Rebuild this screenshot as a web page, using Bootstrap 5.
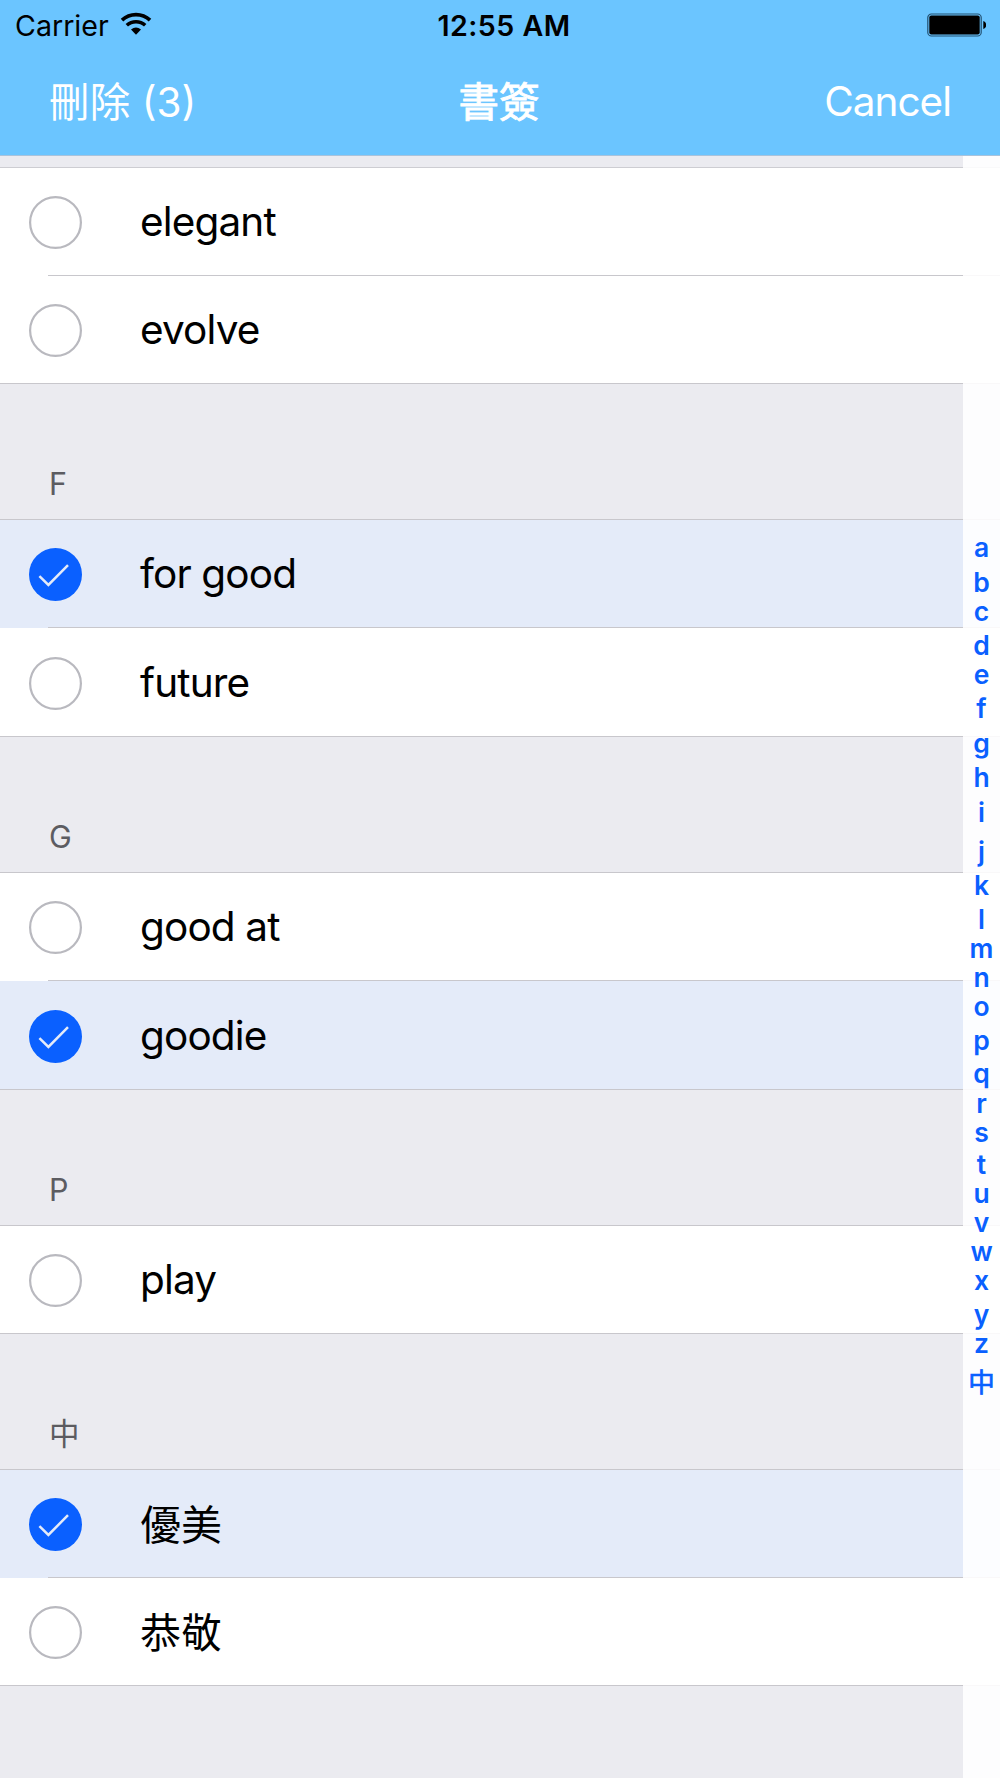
<!DOCTYPE html>
<html lang="zh-Hant">
<head>
<meta charset="utf-8">
<meta name="viewport" content="width=device-width, initial-scale=1">
<title>書簽</title>
<link href="https://cdn.jsdelivr.net/npm/bootstrap@5.3.0/dist/css/bootstrap.min.css" rel="stylesheet">
<style>
  body { font-family: Inter, "Noto Sans CJK TC", sans-serif; background: #ebebf0; color: #000; overflow: hidden; }
  .screen { width: 1000px; height: 1778px; background: #ebebf0; }
  .topbar { height: 156px; background: #6bc5ff; border-bottom: 1px solid #a9c3dc; }
  .status { height: 52px; padding: 0 14px 0 15px; font-size: 28.6px; line-height: 52px; }
  .status > div, .titles > div { flex: 1 1 0; }
  .wifi { margin: -4px 0 0 8px; }
  .battery { margin-top: -2px; }
  .clock { font-weight: 600; letter-spacing: .45px; padding-left: 7px; }
  .titles { height: 103px; padding: 0 49px 0 49px; font-size: 40.5px; line-height: 100px; color: #fff; }
  .cjk { font-family: "Noto Sans CJK TC", sans-serif; font-size: 40.5px; }
  .titles .cjk { line-height: 95px; }
  .heading { -webkit-text-stroke: .9px #fff; padding-right: 2px; }
  .count { letter-spacing: 0; }
  .count .cjk { letter-spacing: .2px; }
  .cancel { letter-spacing: -1px; }
  .strip { height: 12px; border-bottom: 1px solid #cdcdd2; }
  .entry { height: 108px; padding: 1px 0 0 29px; background: #fff; position: relative; font-size: 40.5px; line-height: 1; letter-spacing: -.85px; }
  .entry.tall { height: 109px; }
  .entry::after { content: ""; position: absolute; left: 0; right: 0; bottom: 0; height: 1px; background: #c8c7cc; }
  .entry.inset::after { left: 48px; }
  .entry.picked { background: #e4ebf9; }
  .entry svg { margin-right: 58px; }
  .entry .cjk { letter-spacing: 0; padding-bottom: 4px; font-size: 41px; }
  .group-name { height: 136px; padding: 0 0 20px 49px; border-bottom: 1px solid #c8c7cc; color: #5c5c61; font-size: 30.5px; line-height: 1; }
  .letters { top: 156px; right: 0; width: 37px; height: 1622px; background: rgba(255,255,255,.88); padding-top: 375px; color: #0a60ff; font-size: 26.5px; font-weight: 600; line-height: 32px; }
  .letters span:last-child { font-weight: 400; -webkit-text-stroke: .7px #0a60ff; }
</style>
<script src="https://cdn.jsdelivr.net/npm/bootstrap@5.3.0/dist/js/bootstrap.bundle.min.js"></script>
</head>
<body>
<svg class="d-none" xmlns="http://www.w3.org/2000/svg">
  <symbol id="ring" viewBox="0 0 53 53"><circle cx="26.5" cy="26.5" r="25.4" fill="#fff" stroke="#b9b9bf" stroke-width="2.2"/></symbol>
  <symbol id="tick" viewBox="0 0 53 53"><circle cx="26.5" cy="26.5" r="26.5" fill="#0a60ff"/><path d="M10.4 28.2 19.4 37 39 17.1" fill="none" stroke="#e4ebf9" stroke-width="2.5"/></symbol>
</svg>
<div class="screen position-relative overflow-hidden">
  <header class="topbar">
    <div class="status d-flex align-items-center">
      <div class="d-flex align-items-center">Carrier
        <svg class="wifi" width="40" height="24" viewBox="0 0 40 24" fill="none" stroke="#000">
          <path d="M5 8.1A20.5 20.5 0 0 1 33 8.1" stroke-width="3.7"/>
          <path d="M9.8 13.3A13.5 13.5 0 0 1 28.2 13.3" stroke-width="3.5"/>
          <path d="M14 17.6Q19 13.2 24 17.6L19 22.8Z" fill="#000" stroke="none"/>
        </svg>
      </div>
      <div class="clock text-center">12:55 AM</div>
      <div class="d-flex justify-content-end">
        <svg class="battery" width="60" height="25" viewBox="0 0 60 25">
          <rect x="1.8" y="1" width="53.4" height="22" rx="3.6" fill="none" stroke="#235273" stroke-width="1.2"/>
          <rect x="3.3" y="2.5" width="50.4" height="19" rx="2" fill="#000"/>
          <path d="M57.3 8c4 1.500 4 6.500 0 8z" fill="#000"/>
        </svg>
      </div>
    </div>
    <div class="titles d-flex">
      <div class="count"><span class="cjk">刪除</span> (3)</div>
      <div class="cjk heading text-center">書簽</div>
      <div class="cancel text-end">Cancel</div>
    </div>
  </header>
  <main>
    <div class="strip"></div>
    <div class="entry inset d-flex align-items-center"><svg width="53" height="53"><use href="#ring"/></svg>elegant</div>
    <div class="entry d-flex align-items-center"><svg width="53" height="53"><use href="#ring"/></svg>evolve</div>
    <div class="group-name d-flex align-items-end">F</div>
    <div class="entry picked inset d-flex align-items-center"><svg width="53" height="53"><use href="#tick"/></svg>for good</div>
    <div class="entry tall d-flex align-items-center"><svg width="53" height="53"><use href="#ring"/></svg>future</div>
    <div class="group-name d-flex align-items-end">G</div>
    <div class="entry inset d-flex align-items-center"><svg width="53" height="53"><use href="#ring"/></svg>good at</div>
    <div class="entry picked tall d-flex align-items-center"><svg width="53" height="53"><use href="#tick"/></svg>goodie</div>
    <div class="group-name d-flex align-items-end">P</div>
    <div class="entry d-flex align-items-center"><svg width="53" height="53"><use href="#ring"/></svg>play</div>
    <div class="group-name d-flex align-items-end">中</div>
    <div class="entry picked inset d-flex align-items-center"><svg width="53" height="53"><use href="#tick"/></svg><span class="cjk">優美</span></div>
    <div class="entry d-flex align-items-center"><svg width="53" height="53"><use href="#ring"/></svg><span class="cjk">恭敬</span></div>
  </main>
  <nav class="letters position-absolute d-flex flex-column align-items-center" id="letters"></nav>
</div>
<script>
  // Each letter with the distance down to the next one
  const steps = [['a',35],['b',29],['c',34],['d',29],['e',34],['f',35],['g',34],['h',35],['i',39],['j',34],['k',34],['l',29],['m',29],['n',29],['o',34],['p',33],['q',30],['r',29],['s',32],['t',29],['u',29],['v',29],['w',29],['x',34],['y',29],['z',39],['中',32]];
  const nav = document.getElementById('letters');
  for (const [ch, h] of steps) {
    const s = document.createElement('span');
    s.textContent = ch;
    s.style.height = h + 'px';
    nav.append(s);
  }
</script>
</body>
</html>
